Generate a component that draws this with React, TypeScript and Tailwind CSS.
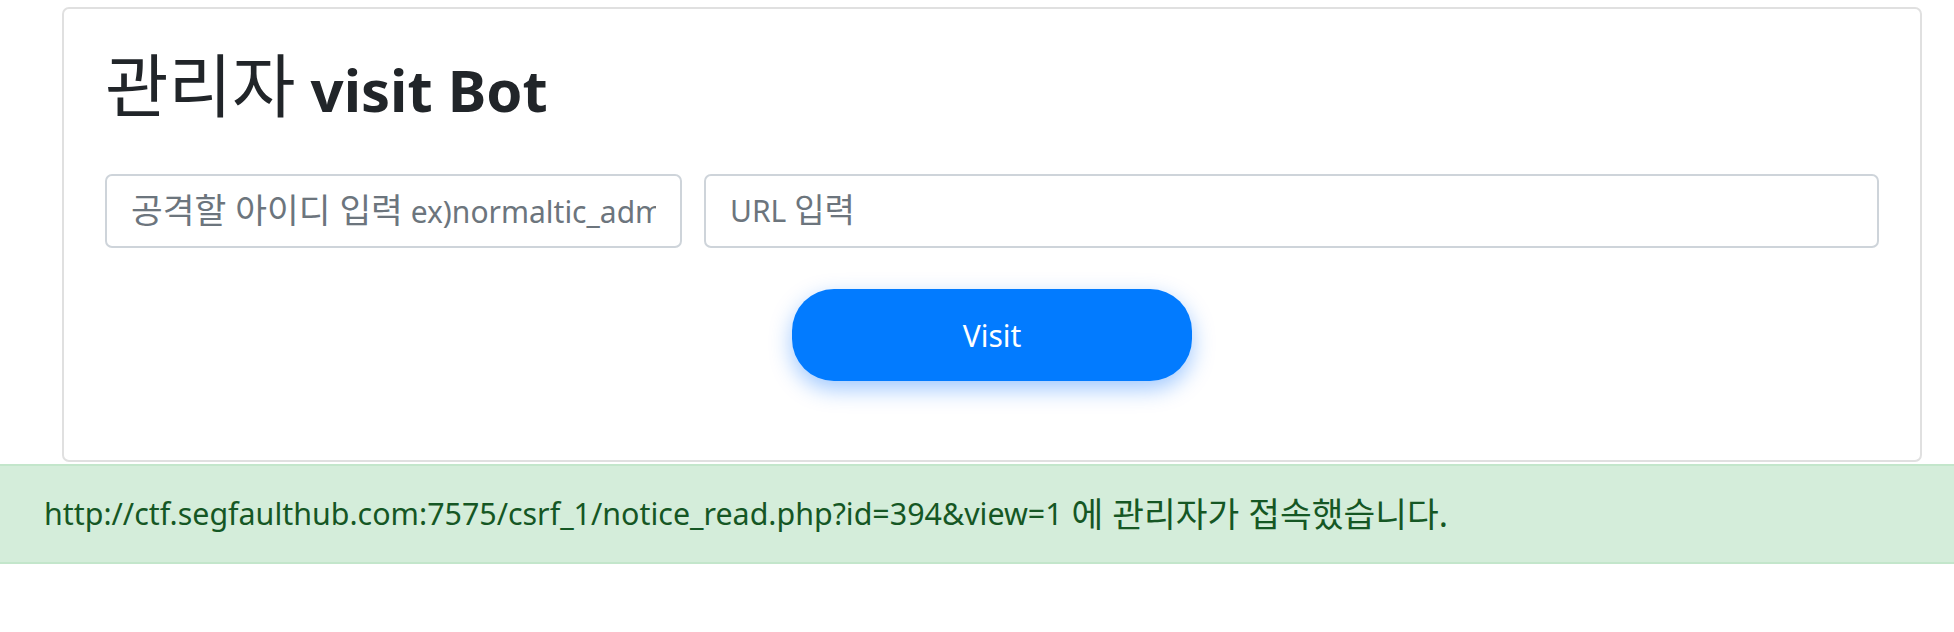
import React from "react";

const latin = "font-['Noto_Sans','Noto_Sans_CJK_KR',sans-serif]";

function FakeInput({ className, children }: { className: string; children: React.ReactNode }) {
  return (
    <div
      role="textbox"
      className={`flex h-[74px] items-center rounded-[7px] border-2 border-[#ced4da] bg-white px-[24px] text-[#6c757d] ${className}`}
    >
      <div className="min-w-0 flex-1 overflow-x-clip whitespace-nowrap pt-[4px] leading-[50px]">{children}</div>
    </div>
  );
}

export default function App() {
  return (
    <div className={`min-h-[632px] w-full bg-white ${latin}`}>
      <div className="ml-[62px] mr-[32px] pt-[7px]">
        <div className="rounded-[7px] border-2 border-[#e0e0e0] bg-white px-[41px] pt-[45px] pb-[79px]">
          <h1 className="m-0 h-[72px] text-[58px] leading-[72px] text-[#212529]">
            <span className="text-[69px] leading-[60px] font-normal">관리자</span>
            <span className="font-bold"> visit Bot</span>
          </h1>
          <div className="mt-[48px] flex gap-[22px]">
            <FakeInput className="w-[577px] shrink-0">
              <span className="text-[34.5px]">공격할 아이디 입력</span>
              <span className="text-[30px]"> ex)normaltic_admin</span>
            </FakeInput>
            <FakeInput className="min-w-0 flex-1">
              <span className="text-[30px]">URL </span>
              <span className="text-[33px]">입력</span>
            </FakeInput>
          </div>
          <div className="mt-[41px] flex justify-center">
            <button className="h-[92px] w-[400px] rounded-[42px] bg-[#027bff] text-[30px] text-white shadow-[0_8px_22px_rgba(0,110,255,0.38)]">
              Visit
            </button>
          </div>
        </div>
      </div>
      <div className="mt-[2px] flex h-[100px] items-center border-y-2 border-[#c3e6cb] bg-[#d4edda] pl-[44px] text-[#155724]">
        <span className="text-[30.4px]">http://ctf.segfaulthub.com:7575/csrf_1/notice_read.php?id=394&amp;view=1</span>
        <span className="whitespace-pre text-[34.5px]"> 에 관리자가 접속했습니다.</span>
      </div>
    </div>
  );
}
